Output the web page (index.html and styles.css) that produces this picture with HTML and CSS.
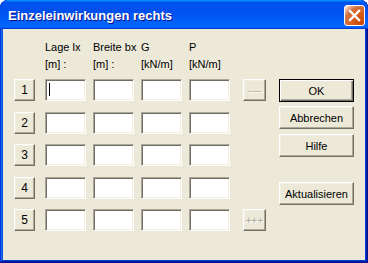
FILE: index.html
```html
<!DOCTYPE html>
<html lang="de">
<head>
    <meta charset="UTF-8">
    <title>Einzeleinwirkungen rechts</title>
    <link rel="stylesheet" href="styles.css">
</head>
<body>
    <div class="window">
        <div class="titlebar">
            <span class="title">Einzeleinwirkungen rechts</span>
            <button class="close" aria-label="Schließen">
                <svg width="13" height="13" viewBox="0 0 13 13">
                    <path d="M2 2 L11 11 M11 2 L2 11" stroke="#fff" stroke-width="2.4" stroke-linecap="square"/>
                </svg>
            </button>
        </div>
        <div class="client">
            <div class="table">
                <span></span>
                <div class="head"><div>Lage lx</div><div>[m] :</div></div>
                <div class="head"><div>Breite bx</div><div>[m] :</div></div>
                <div class="head"><div>G</div><div>[kN/m]</div></div>
                <div class="head"><div>P</div><div>[kN/m]</div></div>
                <span></span>

                <button class="btn num">1</button>
                <div class="field"><span class="caret"></span></div>
                <div class="field"></div>
                <div class="field"></div>
                <div class="field"></div>
                <button class="btn small" disabled>----</button>

                <button class="btn num">2</button>
                <div class="field"></div>
                <div class="field"></div>
                <div class="field"></div>
                <div class="field"></div>
                <span></span>

                <button class="btn num">3</button>
                <div class="field"></div>
                <div class="field"></div>
                <div class="field"></div>
                <div class="field"></div>
                <span></span>

                <button class="btn num">4</button>
                <div class="field"></div>
                <div class="field"></div>
                <div class="field"></div>
                <div class="field"></div>
                <span></span>

                <button class="btn num">5</button>
                <div class="field"></div>
                <div class="field"></div>
                <div class="field"></div>
                <div class="field"></div>
                <button class="btn small" disabled>+++</button>
            </div>
            <div class="side">
                <button class="btn wide default">OK</button>
                <button class="btn wide">Abbrechen</button>
                <button class="btn wide">Hilfe</button>
                <button class="btn wide update">Aktualisieren</button>
            </div>
        </div>
    </div>
</body>
</html>
```

FILE: styles.css
```css
body {
    margin: 0;
    background: #fff;
    font-family: "Liberation Sans", Arial, sans-serif;
    font-size: 11px;
}
.window {
    width: 368px;
    height: 263px;
    display: flex;
    flex-direction: column;
    background: #0831d9;
    border-radius: 8px 8px 0 0;
    box-shadow: inset -1px -1px #00138c, inset 1px 1px #0831d9,
                inset -2px -2px #001ea0, inset 2px 2px #166aee,
                inset -3px -3px #003bda, inset 3px 3px #0855dd;
    overflow: hidden;
}
.titlebar {
    height: 29px;
    flex: none;
    display: flex;
    align-items: center;
    justify-content: space-between;
    padding: 0 3px 0 8px;
    background: linear-gradient(180deg, #0997ff, #0053ee 8%, #0050ee 40%, #06f 88%, #06f 93%, #005bff 95%, #003dd7 96%, #003dd7);
    border-radius: 8px 8px 0 0;
}
.title {
    color: #fff;
    font-weight: bold;
    font-size: 13px;
    text-shadow: 1px 1px #0f1089;
    padding-top: 2px;
}
.close {
    width: 21px;
    height: 21px;
    padding: 0;
    margin-top: 2px;
    display: flex;
    align-items: center;
    justify-content: center;
    border: 1px solid #fff;
    border-radius: 3px;
    background: radial-gradient(circle at 90% 90%, #cc4600 0, #dc6527 55%, #cd7546 70%, #ffccb2 90%, #fff 100%);
}
.client {
    flex: 1;
    margin: 0 3px 3px;
    background: #ece9d8;
    display: flex;
    align-items: flex-start;
    padding: 10px 0 0 11px;
}
.table {
    display: grid;
    grid-template-columns: 24px 41px 41px 41px 41px 29px;
    grid-template-rows: 40px 33px 32px 33px 32px 22px;
    column-gap: 7px;
}
.head {
    line-height: 17px;
    white-space: nowrap;
    color: #000;
}
.field {
    height: 22px;
    box-sizing: border-box;
    background: #fff;
    border: 1px solid;
    border-color: #aca899 #fff #fff #aca899;
    box-shadow: inset 1px 1px #716f64, inset -1px -1px #f1efe2;
    padding: 3px 0 0 3px;
}
.caret {
    display: block;
    width: 1px;
    height: 13px;
    background: #000;
}
.btn {
    font-family: "Liberation Sans", Arial, sans-serif;
    font-size: 11px;
    color: #000;
    background: #ece9d8;
    box-sizing: border-box;
    padding: 0;
    border: 1px solid;
    border-color: #fff #716f64 #716f64 #fff;
    box-shadow: inset -1px -1px #aca899, inset 1px 1px #f1efe2;
}
.num {
    width: 21px;
    height: 22px;
    font-size: 12px;
}
.small {
    width: 23px;
    height: 22px;
    justify-self: end;
    color: #aca899;
    text-shadow: 1px 1px #fff;
    font-size: 10px;
}
.side {
    margin: 40px 0 0 13px;
    display: flex;
    flex-direction: column;
}
.wide {
    width: 75px;
    height: 23px;
    margin-bottom: 4px;
}
.wide:nth-child(2) { margin-bottom: 5px; }
.default {
    border: 1px solid #000;
    box-shadow: inset 1px 1px #fff, inset -1px -1px #716f64, inset -2px -2px #aca899;
}
.update { margin-top: 21px; }
```
